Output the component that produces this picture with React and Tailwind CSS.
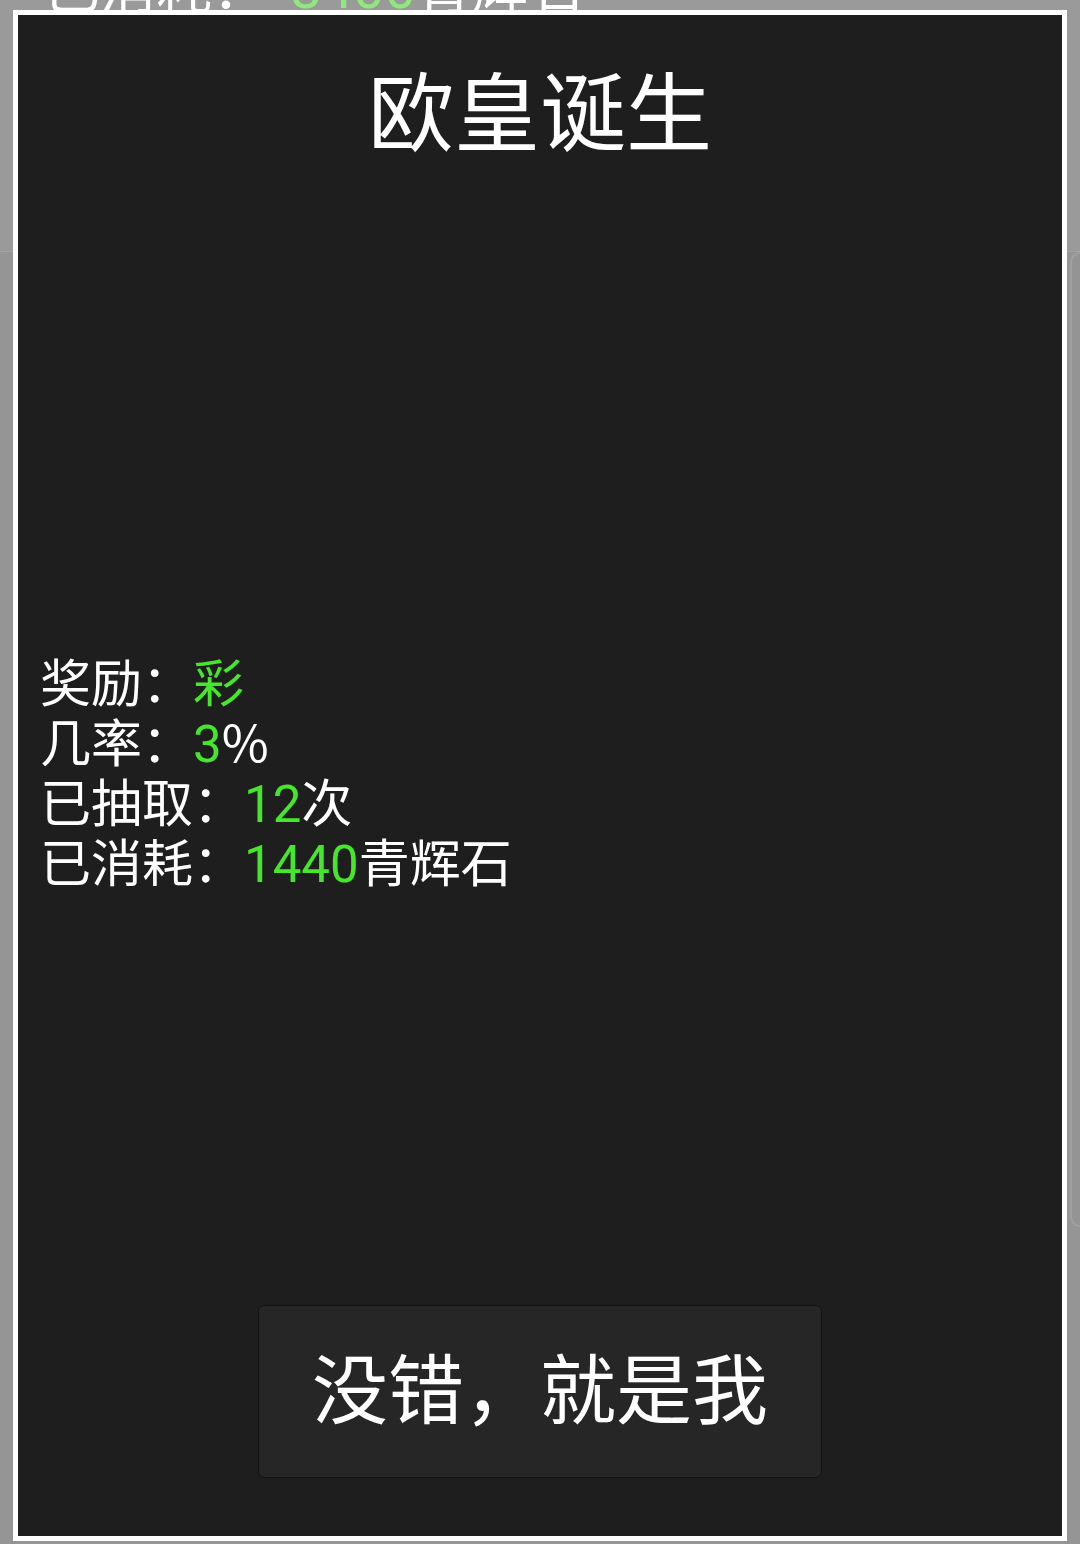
export default function App() {
  const font = { fontFamily: 'Roboto, "Noto Sans CJK SC", sans-serif' };
  return (
    <div
      className="relative w-[1080px] h-[1544px] overflow-hidden bg-[#959595]"
      style={font}
    >
      {/* background page */}
      <div className="flex flex-col">
        <div className="h-[252px] bg-[#9a9a9a] border-b border-[#a3a3a3] overflow-hidden">
          <div className="mt-[-42px] pl-[44px] text-[56px] leading-[62px] text-white whitespace-nowrap">
            已消耗：<span className="ml-[22px] text-[#8fe87c]">8400</span>青辉石
          </div>
        </div>
        <div className="flex h-[975px]">
          <div className="flex-1" />
          <div className="w-[20px] ml-[1070px] rounded-tl-[10px] rounded-bl-[10px] border-l-2 border-t-2 border-b-2 border-[#a0a0a0] bg-[#949494]" />
        </div>
        <div className="flex-1 bg-[#979797]" />
      </div>

      {/* modal */}
      <div className="absolute left-[13px] top-[10px] w-[1054px] h-[1531px] border-[5px] border-white bg-[#1e1e1e] flex flex-col">
        <div className="mt-[58px] h-[86px] text-[86px] leading-[86px] text-white text-center">
          欧皇诞生
        </div>
        <div className="mt-[496px] pl-[22px] text-[51px] leading-[60px] text-white">
          <div className="h-[60px]">
            奖励：<span className="text-[#46e62c]">彩</span>
          </div>
          <div className="h-[60px]">
            几率：<span className="text-[#46e62c]">3</span>
            <span
              className="leading-[0px]"
              style={{ fontFamily: '"Noto Sans CJK SC", sans-serif' }}
            >
              %
            </span>
          </div>
          <div className="h-[60px]">
            已抽取：<span className="text-[#46e62c]">12</span>次
          </div>
          <div className="h-[60px]">
            已消耗：<span className="text-[#46e62c]">1440</span>青辉石
          </div>
        </div>
        <div className="mt-[410px] flex justify-center">
          <button className="w-[564px] h-[173px] rounded-[6px] border border-[#121212] bg-[#262626] text-white text-[76px] leading-none flex items-center justify-center">
            没错，就是我
          </button>
        </div>
      </div>
    </div>
  );
}
